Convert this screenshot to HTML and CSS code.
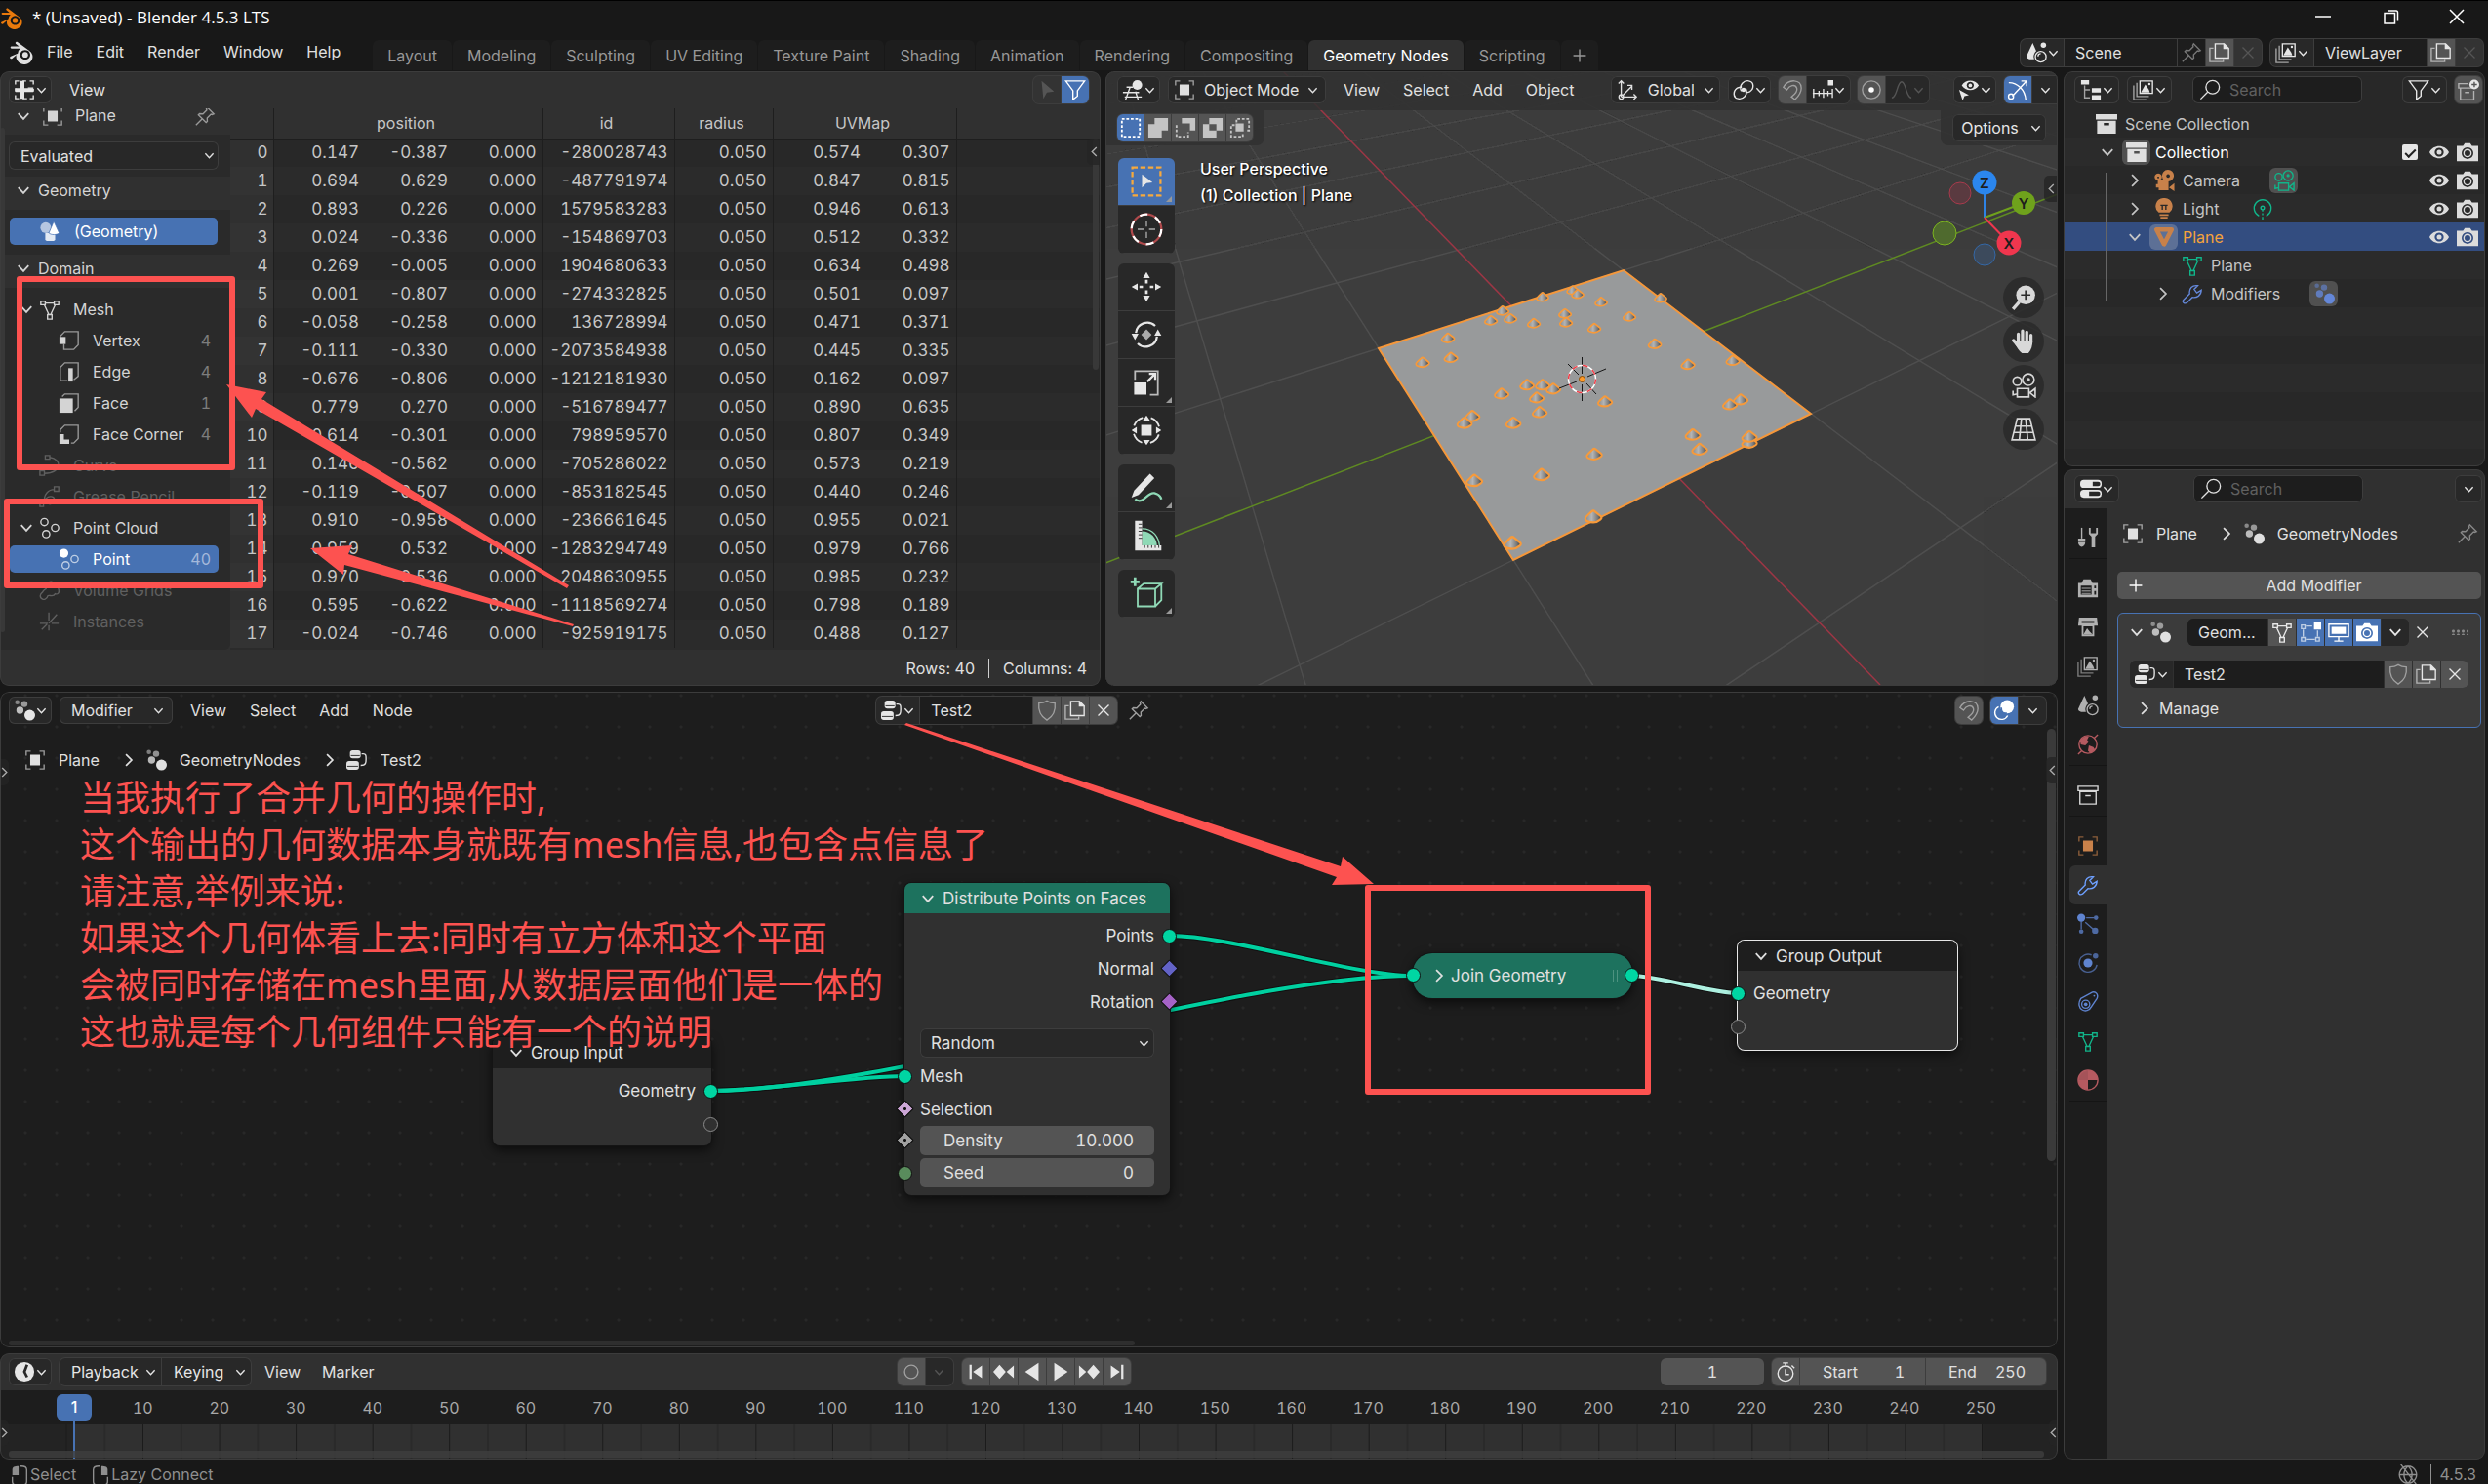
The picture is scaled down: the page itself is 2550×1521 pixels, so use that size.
FILE: index.html
```html
<!DOCTYPE html>
<html lang="en">
<head>
<meta charset="utf-8">
<title>* (Unsaved) - Blender 4.5.3 LTS</title>
<link rel="stylesheet" href="styles.css">
</head>
<body>
<svg class="sprite" aria-hidden="true">
  <symbol id="chev" viewBox="0 0 12 12"><path d="M1.5 3.5l4.500 5 4.500-5" class="ln"/></symbol>
  <symbol id="chev-r" viewBox="0 0 12 12"><path d="M3.5 1l5 5-5 5" class="ln"/></symbol>
  <symbol id="chev-l" viewBox="0 0 12 12"><path d="M8.5 1l-5 5 5 5" class="ln"/></symbol>
  <symbol id="x" viewBox="0 0 24 24"><path d="M6 6l12 12M18 6L6 18" class="ln"/></symbol>
  <symbol id="plus" viewBox="0 0 24 24"><path d="M12 5v14M5 12h14" class="ln"/></symbol>
  <symbol id="blender" viewBox="0 0 24 24"><path fill="currentColor" fill-rule="evenodd" d="M8.5 13.5a7.5 6.8 0 0 1 2.300-4.600H2.600c-1.200 0-1.400-1.700-.3-2h7.400L6.500 4.300c-.8-1 .6-2.300 1.700-1.600l11 8.200a7.800 7.200 0 1 1-12 4.200l-4 3.300c-1.300.9-2.800-.7-1.800-1.700zM15.500 10.300a4.800 4.600 0 1 0 .01 0z"/><circle cx="15.500" cy="14.900" r="2.700" class="hub"/></symbol>
  <symbol id="sheet" viewBox="0 0 24 24"><path d="M2 6V2h4M10 2h4M18 2h4v4M2 18v4h4M18 22h4v-4M22 10h-6M2 10v4M10 22h5M22 14v-3" class="ln"/><path d="M7.500 2h4.500v8h10v4.500H12V22H7.500v-7.500H2V10h5.500z" fill="currentColor"/></symbol>
  <symbol id="object" viewBox="0 0 24 24"><path d="M2 7V2h5M17 2h5v5M22 17v5h-5M7 22H2v-5" class="ln dim"/><path d="M6.500 6h11v12h-11z" fill="currentColor"/></symbol>
  <symbol id="pin" viewBox="0 0 24 24"><path d="M14.500 2l7.500 7.500-2 .8-1.200-.5-4.300 4.400.2 3.800-1.400 1.200-8.600-8.600L6 9.300l3.800.2 4.300-4.300-.5-1.300zM8.800 15.200L2 22" class="ln"/></symbol>
  <symbol id="geo" viewBox="0 0 24 24"><circle cx="7.500" cy="8" r="6" fill="currentColor" opacity=".6"/><path d="M7 14h11v7a2 2 0 0 1-2 2H9a2 2 0 0 1-2-2z" fill="currentColor" opacity=".85"/><path d="M16.500 1l6 13c-2 2.500-9.500 2.500-11.500 0z" fill="currentColor" stroke="#4772b3" stroke-width=".8"/></symbol>
  <symbol id="mesh" viewBox="0 0 24 24"><path d="M2 3h5v4H2zM17 3h5v4h-5zM9.500 18h5v5h-5zM7 5h10M6 7l5 11M18 7l-5 11" class="ln"/></symbol>
  <symbol id="vertex" viewBox="0 0 24 24"><path d="M2 9V7l5-5h15v15l-5 5H6V16" class="ln dim"/><path d="M1 8h7v8H1z" fill="currentColor"/></symbol>
  <symbol id="edge" viewBox="0 0 24 24"><path d="M10 22H2V7l5-5h15v15l-5 4" class="ln dim"/><path d="M11 8h5v15h-5z" fill="currentColor"/></symbol>
  <symbol id="face" viewBox="0 0 24 24"><path d="M4 5l3-3h15v15l-4 4" class="ln dim"/><path d="M1 7h15v16H1z" fill="currentColor"/></symbol>
  <symbol id="corner" viewBox="0 0 24 24"><path d="M2 10V7l5-5h15v15l-5 5h-3" class="ln dim"/><path d="M1 12h5v6h6v5H1z" fill="currentColor"/></symbol>
  <symbol id="curve" viewBox="0 0 24 24"><path d="M7 1h5v4H7zM1 18h5v5H1zM12 3c14 2 14 17-6 18" class="ln"/></symbol>
  <symbol id="gpencil" viewBox="0 0 24 24"><path d="M17 1h5v5h-5zM1 19h4v4H1zM17 4C10 4 6 10 6 15c1 7 10 7 11 1s-9-6-12 3" class="ln"/></symbol>
  <symbol id="cloud" viewBox="0 0 24 24"><g class="ln"><circle cx="6" cy="5.500" r="4"/><circle cx="18" cy="12" r="4"/><circle cx="8" cy="19" r="4"/></g></symbol>
  <symbol id="point" viewBox="0 0 24 24"><circle cx="6" cy="5.500" r="5" fill="currentColor"/><g class="ln dim"><circle cx="18" cy="12" r="4"/><circle cx="8" cy="19" r="4"/></g></symbol>
  <symbol id="volume" viewBox="0 0 24 24"><path d="M4 22c-4-2-3-6 0-8 1-2 3-3 4-4-2-6 6-11 9-5 0 3 5 2 5 6 1 4-1 6-4 5-2 4-6 1-8 2-1 3-4 5-6 4z" class="ln"/></symbol>
  <symbol id="inst" viewBox="0 0 24 24"><path d="M11 2v9M11 16v6M1 14h9M14 14h8M11 14l9-10M9 15l-6 6" class="ln"/></symbol>
  <symbol id="arrow" viewBox="0 0 24 24"><path d="M6 2l14 12-8 1-4 7z" fill="currentColor"/></symbol>
  <symbol id="filter" viewBox="0 0 24 24"><path d="M1.500 2h21L14.500 13v6l-5 4V13z" class="ln"/></symbol>
  <symbol id="view3d" viewBox="0 0 24 24"><path d="M1 15h18M3 20h19M9 9L4 23M15 14l3 9M5 9h7" class="ln"/><circle cx="17" cy="6.500" r="5.500" fill="currentColor"/></symbol>
  <symbol id="axes" viewBox="0 0 24 24"><path d="M5 20V2M2 5l3-3 3 3M5 20h17M19 17l3 3-3 3M7 18L17 8M17 12V7h-5" class="ln"/><circle cx="5" cy="20" r="2.500" class="ln"/></symbol>
  <symbol id="pivot" viewBox="0 0 24 24"><path d="M9.500 13.500C6 6 13 1 18 2c6 1 6 9 1 12-2 1-4 1-5 1M14.500 10.500C18 18 11 23 6 22c-6-1-6-9-1-12 2-1 4-1 5-1" class="ln"/><circle cx="12" cy="12" r="2.500" fill="currentColor"/></symbol>
  <symbol id="magnet" viewBox="0 0 24 24"><path d="M2 9C8-1 22 0 22 10c0 5-3 9-7 13l-4-3c5-4 7-7 6-10-2-5-8-3-11 2z" class="ln"/></symbol>
  <symbol id="snapinc" viewBox="0 0 24 24"><path d="M1 16h22M2 11v10M8 13v6M13 11v10M18 13v6M23 11v10" class="ln"/><path d="M18 1h6v6h-6z" fill="currentColor"/></symbol>
  <symbol id="prop" viewBox="0 0 24 24"><circle cx="12" cy="12" r="10" class="ln"/><circle cx="12" cy="12" r="3" fill="#fff"/></symbol>
  <symbol id="bell" viewBox="0 0 24 24"><path d="M1 21c6 0 6-18 11-18s5 18 11 18" class="ln"/></symbol>
  <symbol id="vis" viewBox="0 0 24 24"><path fill="currentColor" fill-rule="evenodd" d="M4 7c4-7 15-7 19 0-4 7-15 7-19 0zM13.500 3a4 4 0 1 0 .01 0z"/><circle cx="13.500" cy="7" r="2" fill="currentColor"/><path d="M1 12l11 6-5 1-2 5z" fill="currentColor"/></symbol>
  <symbol id="gizmo" viewBox="0 0 24 24"><path d="M2 4c10 0 18 8 19 19M6 19L22 2M16 2h6v6" class="ln"/><circle cx="4.500" cy="19.500" r="2.800" class="ln"/></symbol>
  <symbol id="s-new" viewBox="0 0 24 24"><path d="M2 2h20v20H2z" class="ln thick" stroke-dasharray="3 2"/></symbol>
  <symbol id="s-ext" viewBox="0 0 24 24"><path d="M8 1h15v14h-7v8H1V8h7z" fill="currentColor"/></symbol>
  <symbol id="s-sub" viewBox="0 0 24 24"><path d="M8 1h15v14h-6V7H8z" fill="currentColor"/><path d="M2 9v13h13v-5" class="ln thick" stroke-dasharray="3 2"/></symbol>
  <symbol id="s-xor" viewBox="0 0 24 24"><path fill="currentColor" fill-rule="evenodd" d="M8 1h15v14h-7v8H1V8h7zM8 8v7h8V8z"/></symbol>
  <symbol id="s-int" viewBox="0 0 24 24"><path d="M8 6V2h14v13h-4M6 9H2v13h13v-4" class="ln thick" stroke-dasharray="3 2"/><path d="M7 7h9v9H7z" fill="currentColor"/></symbol>
  <symbol id="t-box" viewBox="0 0 40 40"><path d="M4 4h32v32H4z" fill="none" stroke="#f7a93c" stroke-width="2.500" stroke-dasharray="6 3"/><path d="M15 12l12 9-7 1-5 5z" fill="currentColor"/></symbol>
  <symbol id="t-cur" viewBox="0 0 40 40"><circle cx="20" cy="20" r="17" fill="none" stroke="#b04a4c" stroke-width="2.500"/><circle cx="20" cy="20" r="17" fill="none" stroke="#fff" stroke-width="2.500" stroke-dasharray="9 9"/><path d="M20 10v7M20 23v7M10 20h7M23 20h7" stroke="#aaa" stroke-width="1.500"/></symbol>
  <symbol id="t-move" viewBox="0 0 40 40"><path d="M20 3l4 7h-8zM20 37l-4-7h8zM3 20l7-4v8zM37 20l-7 4v-8z" fill="currentColor"/><path d="M20 12v4M20 24v4M12 20h4M24 20h4" stroke="currentColor" stroke-width="3"/></symbol>
  <symbol id="t-rot" viewBox="0 0 40 40"><path d="M8 18A13 13 0 0 1 30 10M32 22A13 13 0 0 1 10 30" fill="none" stroke="currentColor" stroke-width="2.500"/><path d="M3 19h8l-4 7zM29 21h8l-4-7z" fill="currentColor"/><path d="M20 14l6 6-6 6-6-6z" fill="#aaa"/></symbol>
  <symbol id="t-scale" viewBox="0 0 40 40"><path d="M7 17V7h26v27H24" fill="none" stroke="#bbb" stroke-width="2"/><path d="M6 20h14v14H6z" fill="currentColor"/><path d="M21 19l9-9M23 10h7v7" fill="none" stroke="currentColor" stroke-width="2.500"/></symbol>
  <symbol id="t-all" viewBox="0 0 40 40"><circle cx="20" cy="20" r="15" fill="none" stroke="currentColor" stroke-width="2" stroke-dasharray="14 9.500" stroke-dashoffset="-5"/><path d="M14 14h12v12H14zM20 3l4 6h-8zM20 37l-4-6h8zM3 20l6-4v8zM37 20l-6 4v-8z" fill="currentColor"/></symbol>
  <symbol id="t-pen" viewBox="0 0 40 40"><path d="M24 4l5 5L11 28l-8 3 3-8z" fill="currentColor"/><path d="M7 33c10 7 14-9 22-7 4 1 7 3 8 7" fill="none" stroke="#8fd9b6" stroke-width="2.500"/></symbol>
  <symbol id="t-meas" viewBox="0 0 40 40"><path d="M15 15c10 0 17 8 17 17H15z" fill="#8fd9b6"/><path d="M15 12c13 0 19 10 20 20" fill="none" stroke="#8fd9b6" stroke-width="1.500"/><path d="M7 3h8v28h22v6H7z" fill="currentColor"/><path d="M11 7h4M11 11h4M11 15h4M11 19h4M11 23h4M18 31v3M22 31v3M26 31v3M30 31v3M34 31v3" stroke="#282828"/></symbol>
  <symbol id="t-cube" viewBox="0 0 40 40"><path d="M10 15h20v20H10zM10 15l7-6h20l-7 6M37 9v19l-7 7" fill="none" stroke="#8fd9b6" stroke-width="2"/><path d="M7 2v10M2 7h10" stroke="#8fd9b6" stroke-width="3"/></symbol>
  <symbol id="zoom" viewBox="0 0 24 24"><circle cx="14" cy="9.500" r="9" fill="currentColor"/><path d="M8 16l-6 7" stroke="currentColor" stroke-width="3"/><path d="M14 5v9M9.500 9.500h9" stroke="#2a2a2a" stroke-width="1.500"/></symbol>
  <symbol id="hand" viewBox="0 0 24 24"><path d="M7 13V5M11 12V2M15 12V3M19 13V6M7 16L2.500 11" stroke="currentColor" stroke-width="3" stroke-linecap="round"/><path d="M5.500 11h15c0 5-1 9-4 12h-6c-3-2-5-6-7-9z" fill="currentColor"/></symbol>
  <symbol id="cam" viewBox="0 0 24 24"><g class="ln"><circle cx="6" cy="8" r="4"/><circle cx="16.500" cy="6.500" r="5.500"/><circle cx="16.500" cy="6.500" r="1"/><path d="M6 15h11v8H6zM2 17v4l4-1M23 15v8l-5-4z"/></g></symbol>
  <symbol id="camf" viewBox="0 0 24 24"><path fill="currentColor" fill-rule="evenodd" d="M5.500 4a4 4 0 1 0 .01 0zM16.500 0a6.500 6.500 0 0 0-6.500 8c0 3 3 5 6.500 5a6.500 6.500 0 0 0 0-13zM16.500 5a2 2 0 1 1-.01 0zM5.500 7.500a1 1 0 1 1-.01 0z"/><path d="M5 12h12v11H6v-3H3v-4h2zM23.500 15v9l-6-4z" fill="currentColor"/></symbol>
  <symbol id="persp" viewBox="0 0 24 24"><path d="M6 2h12l5 20H1zM4 9h16M3 15h18M10 2L8 22M14 2l2 20" class="ln"/></symbol>
  <symbol id="scene" viewBox="0 0 24 24"><path d="M8 1l4 9c-4 4-3 8-2 9-4 1-9 0-9-3z" fill="currentColor"/><circle cx="20" cy="3.500" r="3" fill="currentColor"/><circle cx="17" cy="16.500" r="6" class="ln"/><path d="M14 16a3 3 0 0 1 3-3" class="ln"/></symbol>
  <symbol id="copy" viewBox="0 0 24 24"><path d="M5 7H1v15h15v-3" class="ln dim"/><path d="M7 2h10l5 5v11H7z" class="ln"/><path d="M16 1l7 7h-7z" fill="currentColor"/></symbol>
  <symbol id="layers" viewBox="0 0 24 24"><path d="M1 7v16h14M4.500 4v15.500H18" class="ln dim"/><path d="M8 2h14v14H8z" class="ln"/><path d="M9 15l5-9 4 6 1 3z" fill="currentColor"/><circle cx="18.500" cy="5.500" r="1.300" fill="currentColor"/></symbol>
  <symbol id="tree" viewBox="0 0 24 24"><path d="M1 1h9v5H1zM13 10h10v5H13zM13 18h10v5H13z" fill="currentColor"/><path d="M5 7v14h6M5 12h6" class="ln dim"/></symbol>
  <symbol id="search" viewBox="0 0 24 24"><circle cx="15" cy="9" r="7.500" class="ln"/><path d="M9.500 14.500L1.500 22.500" class="ln"/></symbol>
  <symbol id="newcol" viewBox="0 0 24 24"><path d="M12 5H1v5h15M3 10v13h15V13M8 15h5" class="ln dim"/><circle cx="18.500" cy="6" r="5.500" fill="currentColor"/><path d="M18.500 3v6M15.500 6h6" stroke="#545454" stroke-width="1.500"/></symbol>
  <symbol id="coll" viewBox="0 0 24 24"><path fill="currentColor" fill-rule="evenodd" d="M0 1h24v6H0zM1.500 8.500h21V23h-21zM9 11v2.500h6V11z"/></symbol>
  <symbol id="collo" viewBox="0 0 24 24"><path d="M1 2h22v5H1zM3 8h18v14H3zM9 12.500h6" class="ln"/></symbol>
  <symbol id="bulb" viewBox="0 0 24 24"><path d="M12 0a9 9 0 0 0-6 16h12A9 9 0 0 0 12 0zM7 18h10v2H7zM8 21h8v2H8z" fill="currentColor"/><path d="M8 8h8M10 8v5M14 8v5" stroke="#282828" stroke-width="1.500"/></symbol>
  <symbol id="lightd" viewBox="0 0 24 24"><path d="M8 20A9.500 9.500 0 1 1 16 20M12 13v2M12 17v2M12 21v3" class="ln"/><circle cx="12" cy="11" r="2" class="ln"/></symbol>
  <symbol id="tri" viewBox="0 0 24 24"><path d="M3.500 3.500h17L12 20z" fill="none" stroke="currentColor" stroke-width="5" stroke-linejoin="round"/></symbol>
  <symbol id="wrench" viewBox="0 0 24 24"><path d="M2 19l7-7c-1-6 3-10 9-9l-4 4 3 4 5-3c0 6-5 9-10 8l-6 6c-3 2-6-1-4-3z" class="wr"/></symbol>
  <symbol id="nodes" viewBox="0 0 24 24"><circle cx="4" cy="3" r="2.500" fill="currentColor" opacity=".5"/><circle cx="12" cy="5" r="3.500" fill="currentColor" opacity=".6"/><circle cx="7" cy="12" r="4" fill="currentColor" opacity=".8"/><circle cx="18" cy="17.500" r="6" fill="currentColor"/></symbol>
  <symbol id="eye" viewBox="0 0 24 24"><path fill="currentColor" fill-rule="evenodd" d="M0 12C5 2 19 2 24 12 19 22 5 22 0 12zM12 6.500a5.500 5.500 0 1 0 .01 0z"/><circle cx="12" cy="12" r="3" fill="currentColor"/></symbol>
  <symbol id="photo" viewBox="0 0 24 24"><path fill="currentColor" fill-rule="evenodd" d="M0 5h7l2-3h6l2 3h7v17H0zM12 6.500a6.500 6.500 0 1 0 .01 0z"/><circle cx="12" cy="13" r="4" class="ln"/></symbol>
  <symbol id="props" viewBox="0 0 24 24"><rect y="2" width="24" height="9" rx="4" fill="currentColor"/><rect y="13" width="24" height="9" rx="4" fill="currentColor"/><path d="M14 4h6a2.500 2.500 0 0 1 0 5h-6zM10 15h10a2.500 2.500 0 0 1 0 5H10z" fill="#282828"/></symbol>
  <symbol id="tool" viewBox="0 0 24 24"><path d="M5 1v12" class="ln"/><path d="M1 13h8v3H1zM1 17h8c0 7-8 7-8 0zM13 1v7l3 3v12h4V11l3-3V1h-2v6h-6V1z" fill="currentColor"/></symbol>
  <symbol id="render" viewBox="0 0 24 24"><path fill="currentColor" fill-rule="evenodd" d="M1 6h4l2-4h8l2 4h6v16H1zM4 9v10h12V9zM19 9v3h2V9zM19 15v4h2v-4z"/><path d="M5 12h10M5 15h10M5 18h10" class="ln dim"/></symbol>
  <symbol id="output" viewBox="0 0 24 24"><path fill="currentColor" fill-rule="evenodd" d="M2 1h20l1 9h-4v12H5V10H1zM7 11v9h10v-9zM5 5v2h14V5z"/><path d="M7 20l4-7 3 4 3 3z" fill="currentColor"/></symbol>
  <symbol id="world" viewBox="0 0 24 24"><circle cx="12" cy="12" r="10" class="ln"/><path d="M3 7c4-4 7-5 10-4l-2 4 2 2-4 4-5-1zM13 13l5 2 2 3-5 4-3-3z" fill="currentColor"/><path d="M23 1l-4 4M1 23l4-4" class="ln"/></symbol>
  <symbol id="parts" viewBox="0 0 24 24"><circle cx="4.500" cy="5" r="4.500" fill="currentColor"/><g opacity=".75"><circle cx="21" cy="5" r="2.500" fill="currentColor"/><circle cx="4.500" cy="20.500" r="2.500" fill="currentColor"/><circle cx="20" cy="19.500" r="3.500" fill="currentColor"/><path d="M4.500 9v9M10 5h9M9 10l9 8" class="ln"/></g></symbol>
  <symbol id="phys" viewBox="0 0 24 24"><circle cx="12" cy="12" r="5" fill="currentColor"/><circle cx="20.500" cy="4" r="3" fill="currentColor" opacity=".7"/><path d="M16 3A10 10 0 1 0 22 14" class="ln dim"/></symbol>
  <symbol id="cons" viewBox="0 0 24 24"><path d="M4 8L17 1c4-1 7 3 5 7l-6 9C11 27-3 20 4 8z" class="ln"/><circle cx="9.500" cy="14.500" r="4.500" class="ln"/><circle cx="9.500" cy="14.500" r="2" fill="currentColor"/><circle cx="19" cy="5" r="1" fill="currentColor"/></symbol>
  <symbol id="mat" viewBox="0 0 24 24"><circle cx="12" cy="12" r="11" class="ln"/><path d="M12 1A11 11 0 0 0 1 12h11zM12 1a11 11 0 0 1 11 11H12z" fill="currentColor" opacity=".9"/><path d="M12 1v11h11A11 11 0 0 0 12 1zM1 12h11v11A11 11 0 0 1 1 12z" fill="currentColor"/></symbol>
  <symbol id="editm" viewBox="0 0 24 24"><path d="M2 4h4v4H2zM2 18h4v4H2zM18 18h4v4h-4zM7 5h7M4 9v8M7 20h10M20 10v7" class="ln dim"/><path d="M16 1h8v8h-8z" fill="currentColor"/></symbol>
  <symbol id="screen" viewBox="0 0 24 24"><path d="M1 3h22v14H1zM7 22h10M12 17v5" class="ln"/><path d="M4 6h16v8H4z" fill="currentColor"/></symbol>
  <symbol id="ntree" viewBox="0 0 24 24"><rect x="4" y="1" width="12" height="9" rx="3" fill="currentColor"/><rect x="0" y="13" width="14" height="10" rx="3" fill="currentColor"/><path d="M17 5h2c3 0 3 2 3 6s0 7-6 7" class="ln"/><path d="M5 7h10M1 19h12" stroke="#282828"/></symbol>
  <symbol id="shield" viewBox="0 0 24 24"><path d="M12 1.500C9 3.500 6 4 3 4c-1 9 2 15 9 19 7-4 10-10 9-19-3 0-6-.5-9-2.500z" class="ln"/></symbol>
  <symbol id="overlay" viewBox="0 0 24 24"><circle cx="15.500" cy="8" r="7.500" fill="currentColor"/><path d="M6 8a7.500 7.500 0 1 0 10 10" class="ln"/><path d="M9 9c0 5 2 7 6 6" stroke="#4772b3" stroke-width="1.500" fill="none"/></symbol>
  <symbol id="clockf" viewBox="0 0 24 24"><circle cx="12" cy="12" r="11" fill="currentColor"/><path d="M15 4l-3 8 3 6" fill="none" stroke="#282828" stroke-width="3"/></symbol>
  <symbol id="watch" viewBox="0 0 24 24"><circle cx="12" cy="14" r="8.500" class="ln"/><path d="M9 2h6M12 2v3M12 9v6h4M19 5l3 3" class="ln"/></symbol>
  <symbol id="p-first" viewBox="0 0 24 24"><path d="M5 4h2.500v16H5zM19 5v14L9 12z" fill="currentColor"/></symbol>
  <symbol id="p-prev" viewBox="0 0 24 24"><path d="M7 4l7 8-7 8-7-8zM23 5v14l-8-7z" fill="currentColor"/></symbol>
  <symbol id="p-rev" viewBox="0 0 24 24"><path d="M19 2v20L4 12z" fill="currentColor"/></symbol>
  <symbol id="mouse" viewBox="0 0 24 24"><path d="M13 3h1c4 0 6 1 6 4v13c0 3-1 4-4 4H8c-3 0-4-1-4-4v-5" class="ln"/><path d="M4 13V7c0-3 2-4 7-4v10z" fill="currentColor"/></symbol>
  <symbol id="globe" viewBox="0 0 24 24"><path d="M12 3a9.500 9.500 0 1 0 .01 0zM12 3c-6 5-6 14 0 19 6-5 6-14 0-19zM3 12.500h18M4 1l17 22" class="ln"/></symbol>
</svg>

<div class="app">
  <header class="titlebar">
    <svg class="logo"><use href="#blender"/></svg>
    <h1>* (Unsaved) - Blender 4.5.3 LTS</h1>
    <div class="winctl">
      <button aria-label="Minimize"><svg viewBox="0 0 16 16"><path d="M0 8h16" class="ln"/></svg></button>
      <button aria-label="Restore"><svg viewBox="0 0 16 16"><path d="M1 4.500h10.500V15H1zM4 2h9q1.500 0 1.500 2v8.500" class="ln"/></svg></button>
      <button aria-label="Close"><svg viewBox="0 0 16 16"><path d="M1 1l14 14M15 1L1 15" class="ln"/></svg></button>
    </div>
  </header>

  <nav class="topbar">
    <button class="brand" aria-label="Blender"><svg class="ic"><use href="#blender"/></svg></button>
    <div class="menus"><button>File</button><button>Edit</button><button>Render</button><button>Window</button><button>Help</button></div>
    <div class="tabs">
      <button>Layout</button><button>Modeling</button><button>Sculpting</button><button>UV Editing</button><button>Texture Paint</button><button>Shading</button><button>Animation</button><button>Rendering</button><button>Compositing</button><button class="on">Geometry Nodes</button><button>Scripting</button><button aria-label="Add workspace"><svg class="ic"><use href="#plus"/></svg></button>
    </div>
    <div class="ids">
      <div class="grp scene"><button class="ed" aria-label="Browse scene"><svg class="ic"><use href="#scene"/></svg><svg class="cv"><use href="#chev"/></svg></button><input aria-label="Scene" value="Scene"><span class="cell field"><svg class="ic faint"><use href="#pin"/></svg></span><button class="cell" aria-label="New scene"><svg class="ic"><use href="#copy"/></svg></button><button class="cell off" aria-label="Delete scene"><svg class="ic"><use href="#x"/></svg></button></div>
      <div class="grp layer"><button class="ed" aria-label="Browse view layer"><svg class="ic"><use href="#layers"/></svg><svg class="cv"><use href="#chev"/></svg></button><input aria-label="View layer" value="ViewLayer"><button class="cell" aria-label="New layer"><svg class="ic"><use href="#copy"/></svg></button><button class="cell off" aria-label="Delete layer"><svg class="ic"><use href="#x"/></svg></button></div>
    </div>
  </nav>

  <main class="screen">
    <div class="left">
      <div class="upper">
        <section class="editor spread">
          <header class="bar">
            <button class="ed box" aria-label="Editor type"><svg class="ic"><use href="#sheet"/></svg><svg class="cv"><use href="#chev"/></svg></button>
            <div class="menus"><button>View</button></div>
            <i class="grow"></i>
            <div class="grp"><button class="cell off" aria-label="Selected only"><svg class="ic"><use href="#arrow"/></svg></button><button class="cell on" aria-label="Filter"><svg class="ic"><use href="#filter"/></svg></button></div>
          </header>
          <div class="spread-body">
            <aside class="side">
              <i class="vscroll"></i>
              <div class="phead first"><svg class="cv big"><use href="#chev"/></svg><svg class="ic"><use href="#object"/></svg><span>Plane</span><svg class="ic pin"><use href="#pin"/></svg></div>
              <div class="dd eval"><select aria-label="Object evaluation state"><option>Evaluated</option></select><svg class="cv"><use href="#chev"/></svg></div>
              <div class="phead"><svg class="cv big"><use href="#chev"/></svg><span>Geometry</span></div>
              <button class="geo"><svg class="ic"><use href="#geo"/></svg>(Geometry)</button>
              <div class="phead"><svg class="cv big"><use href="#chev"/></svg><span>Domain</span></div>
              <ul class="domains">
                <li><svg class="cv big"><use href="#chev"/></svg><svg class="ic"><use href="#mesh"/></svg><span>Mesh</span></li>
                <li class="sub"><svg class="ic"><use href="#vertex"/></svg><span>Vertex</span><b>4</b></li>
                <li class="sub"><svg class="ic"><use href="#edge"/></svg><span>Edge</span><b>4</b></li>
                <li class="sub"><svg class="ic"><use href="#face"/></svg><span>Face</span><b>1</b></li>
                <li class="sub"><svg class="ic"><use href="#corner"/></svg><span>Face Corner</span><b>4</b></li>
                <li class="none"><svg class="ic"><use href="#curve"/></svg><span>Curve</span></li>
                <li class="none"><svg class="ic"><use href="#gpencil"/></svg><span>Grease Pencil</span></li>
                <li><svg class="cv big"><use href="#chev"/></svg><svg class="ic"><use href="#cloud"/></svg><span>Point Cloud</span></li>
                <li class="sub sel"><svg class="ic"><use href="#point"/></svg><span>Point</span><b>40</b></li>
                <li class="none"><svg class="ic"><use href="#volume"/></svg><span>Volume Grids</span></li>
                <li class="none"><svg class="ic"><use href="#inst"/></svg><span>Instances</span></li>
              </ul>
            </aside>
            <div class="tablewrap">
              <table>
                <colgroup><col class="c-i"><col class="c-x"><col class="c-y"><col class="c-y"><col class="c-id"><col class="c-r"><col class="c-u"><col class="c-v"><col></colgroup>
                <thead><tr><th></th><th colspan="3">position</th><th>id</th><th>radius</th><th colspan="2">UVMap</th><th></th></tr></thead>
                <tbody>
                <tr><th>0</th><td>0.147</td><td>-0.387</td><td>0.000</td><td>-280028743</td><td>0.050</td><td>0.574</td><td>0.307</td><td></td></tr>
                <tr><th>1</th><td>0.694</td><td>0.629</td><td>0.000</td><td>-487791974</td><td>0.050</td><td>0.847</td><td>0.815</td><td></td></tr>
                <tr><th>2</th><td>0.893</td><td>0.226</td><td>0.000</td><td>1579583283</td><td>0.050</td><td>0.946</td><td>0.613</td><td></td></tr>
                <tr><th>3</th><td>0.024</td><td>-0.336</td><td>0.000</td><td>-154869703</td><td>0.050</td><td>0.512</td><td>0.332</td><td></td></tr>
                <tr><th>4</th><td>0.269</td><td>-0.005</td><td>0.000</td><td>1904680633</td><td>0.050</td><td>0.634</td><td>0.498</td><td></td></tr>
                <tr><th>5</th><td>0.001</td><td>-0.807</td><td>0.000</td><td>-274332825</td><td>0.050</td><td>0.501</td><td>0.097</td><td></td></tr>
                <tr><th>6</th><td>-0.058</td><td>-0.258</td><td>0.000</td><td>136728994</td><td>0.050</td><td>0.471</td><td>0.371</td><td></td></tr>
                <tr><th>7</th><td>-0.111</td><td>-0.330</td><td>0.000</td><td>-2073584938</td><td>0.050</td><td>0.445</td><td>0.335</td><td></td></tr>
                <tr><th>8</th><td>-0.676</td><td>-0.806</td><td>0.000</td><td>-1212181930</td><td>0.050</td><td>0.162</td><td>0.097</td><td></td></tr>
                <tr><th>9</th><td>0.779</td><td>0.270</td><td>0.000</td><td>-516789477</td><td>0.050</td><td>0.890</td><td>0.635</td><td></td></tr>
                <tr><th>10</th><td>0.614</td><td>-0.301</td><td>0.000</td><td>798959570</td><td>0.050</td><td>0.807</td><td>0.349</td><td></td></tr>
                <tr><th>11</th><td>0.146</td><td>-0.562</td><td>0.000</td><td>-705286022</td><td>0.050</td><td>0.573</td><td>0.219</td><td></td></tr>
                <tr><th>12</th><td>-0.119</td><td>-0.507</td><td>0.000</td><td>-853182545</td><td>0.050</td><td>0.440</td><td>0.246</td><td></td></tr>
                <tr><th>13</th><td>0.910</td><td>-0.958</td><td>0.000</td><td>-236661645</td><td>0.050</td><td>0.955</td><td>0.021</td><td></td></tr>
                <tr><th>14</th><td>0.959</td><td>0.532</td><td>0.000</td><td>-1283294749</td><td>0.050</td><td>0.979</td><td>0.766</td><td></td></tr>
                <tr><th>15</th><td>0.970</td><td>-0.536</td><td>0.000</td><td>2048630955</td><td>0.050</td><td>0.985</td><td>0.232</td><td></td></tr>
                <tr><th>16</th><td>0.595</td><td>-0.622</td><td>0.000</td><td>-1118569274</td><td>0.050</td><td>0.798</td><td>0.189</td><td></td></tr>
                <tr><th>17</th><td>-0.024</td><td>-0.746</td><td>0.000</td><td>-925919175</td><td>0.050</td><td>0.488</td><td>0.127</td><td></td></tr>
                </tbody>
              </table>
              <i class="vscroll right"></i>
              <button class="flap" aria-label="Show sidebar"><svg class="cv"><use href="#chev-l"/></svg></button>
            </div>
          </div>
          <footer class="stats"><span>Rows: 40</span><i></i><span>Columns: 4</span></footer>
        </section>

        <section class="editor view3d">
          <svg class="world" viewBox="1133 73 976 630" preserveAspectRatio="xMidYMid slice">
            <defs><linearGradient id="shade"><stop offset="0" stop-color="#8a8a8a"/><stop offset=".4" stop-color="#b4b4b4"/><stop offset=".75" stop-color="#7a7a7a"/><stop offset="1" stop-color="#3c3c3c"/></linearGradient>
            <path id="cone" d="M-7 2Q-7 1-1.500-4Q0-5.500 1.500-4L6.500 0Q8 1.500 6 3Q3 5.500 0 5.500T-6 4Q-7 3-7 2z" fill="url(#shade)" stroke="#f79a3a" stroke-width="1.900"/></defs>
            <g id="floor"></g>
            <path d="M1315 73L1927 702" stroke="#9c3645" stroke-width="1.500"/>
            <path d="M1133 577L2109 199" stroke="#5f8a22" stroke-width="1.500"/>
            <path d="M1413 357L1664 277 1856 424 1551 574z" fill="#989a9b" stroke="#f5973a" stroke-width="2"/>
            <g id="points"></g>
            <g stroke="#161616" stroke-width="1"><path d="M1621.500 366v17M1621.500 394v17M1598 398l18-7M1627 386l19-8M1607 373l11 11M1626 393l10 11"/></g>
            <circle cx="1621.500" cy="388.500" r="14" fill="none" stroke="#fff" stroke-width="1.500"/><circle cx="1621.500" cy="388.500" r="14" fill="none" stroke="#f03c46" stroke-width="1.500" stroke-dasharray="5.500 5.500"/>
            <circle cx="1621.500" cy="388.500" r="3" fill="#ff9a2a" stroke="#8a4a00"/>
          </svg>
          <header class="bar">
            <button class="ed box" aria-label="Editor type"><svg class="ic"><use href="#view3d"/></svg><svg class="cv"><use href="#chev"/></svg></button>
            <div class="dd mode"><svg class="ic"><use href="#object"/></svg><select aria-label="Mode"><option>Object Mode</option></select><svg class="cv"><use href="#chev"/></svg></div>
            <div class="menus"><button>View</button><button>Select</button><button>Add</button><button>Object</button></div>
            <i class="grow"></i>
            <div class="dd orient"><svg class="ic"><use href="#axes"/></svg><select aria-label="Transform orientation"><option>Global</option></select><svg class="cv"><use href="#chev"/></svg></div>
            <button class="ed box" aria-label="Pivot point"><svg class="ic"><use href="#pivot"/></svg><svg class="cv"><use href="#chev"/></svg></button>
            <div class="grp"><button class="cell dim" aria-label="Snap"><svg class="ic"><use href="#magnet"/></svg></button><button class="ed" aria-label="Snapping"><svg class="ic"><use href="#snapinc"/></svg><svg class="cv"><use href="#chev"/></svg></button></div>
            <div class="grp"><button class="cell dim" aria-label="Proportional editing"><svg class="ic"><use href="#prop"/></svg></button><button class="ed off" aria-label="Falloff"><svg class="ic"><use href="#bell"/></svg><svg class="cv"><use href="#chev"/></svg></button></div>
            <i class="grow"></i>
            <button class="ed box" aria-label="Visibility"><svg class="ic"><use href="#vis"/></svg><svg class="cv"><use href="#chev"/></svg></button>
            <div class="grp last"><button class="cell on" aria-label="Gizmos"><svg class="ic"><use href="#gizmo"/></svg></button><button class="ed slim" aria-label="Gizmo options"><svg class="cv"><use href="#chev"/></svg></button></div>
          </header>
          <div class="bar2">
            <div class="pad l"><div class="grp modes"><button class="cell on" aria-label="Set"><svg class="ic"><use href="#s-new"/></svg></button><button class="cell" aria-label="Extend"><svg class="ic"><use href="#s-ext"/></svg></button><button class="cell" aria-label="Subtract"><svg class="ic"><use href="#s-sub"/></svg></button><button class="cell" aria-label="Invert"><svg class="ic"><use href="#s-xor"/></svg></button><button class="cell" aria-label="Intersect"><svg class="ic"><use href="#s-int"/></svg></button></div></div>
            <div class="pad r"><button class="ed box opts">Options<svg class="cv"><use href="#chev"/></svg></button></div>
          </div>
          <div class="stage">
            <div class="tools">
              <div><button class="on more" aria-label="Select box"><svg><use href="#t-box"/></svg></button><button aria-label="Cursor"><svg><use href="#t-cur"/></svg></button></div>
              <div><button aria-label="Move"><svg><use href="#t-move"/></svg></button><button aria-label="Rotate"><svg><use href="#t-rot"/></svg></button><button class="more" aria-label="Scale"><svg><use href="#t-scale"/></svg></button><button aria-label="Transform"><svg><use href="#t-all"/></svg></button></div>
              <div><button class="more" aria-label="Annotate"><svg><use href="#t-pen"/></svg></button><button aria-label="Measure"><svg><use href="#t-meas"/></svg></button></div>
              <div><button class="more" aria-label="Add cube"><svg><use href="#t-cube"/></svg></button></div>
            </div>
            <p class="info">User Perspective<br>(1) Collection | Plane</p>
            <div class="nav">
              <svg class="axis" viewBox="1980 170 110 108"><path d="M2034 223v-36" stroke="#2e83e6" stroke-width="2"/><path d="M2034 223l40-15" stroke="#6fa21c" stroke-width="2"/><path d="M2034 223l25 26" stroke="#f0364e" stroke-width="2"/>
                <circle cx="2009" cy="198" r="11" fill="#5a3a40" stroke="#a83a4c"/><circle cx="1993" cy="239" r="12" fill="#4f6a2e" stroke="#7db61e"/><circle cx="2034" cy="261" r="11" fill="#3c4a5c" stroke="#3468a8"/>
                <circle cx="2034" cy="187" r="12.500" fill="#2b86ee"/><circle cx="2074" cy="208" r="12" fill="#6fa21c"/><circle cx="2059" cy="249" r="12.500" fill="#f0364e"/>
                <text x="2034" y="193">Z</text><text x="2074" y="214">Y</text><text x="2059" y="255">X</text></svg>
              <button aria-label="Zoom"><svg class="ic"><use href="#zoom"/></svg></button><button aria-label="Pan"><svg class="ic"><use href="#hand"/></svg></button><button aria-label="Camera view"><svg class="ic"><use href="#cam"/></svg></button><button aria-label="Perspective"><svg class="ic"><use href="#persp"/></svg></button>
            </div>
          </div>
          <button class="flap v" aria-label="Show sidebar"><svg class="cv"><use href="#chev-l"/></svg></button>
        </section>
      </div>

      <section class="editor nodes">
        <header class="bar">
          <button class="ed box" aria-label="Editor type"><svg class="ic"><use href="#nodes"/></svg><svg class="cv"><use href="#chev"/></svg></button>
          <div class="dd kind"><select aria-label="Node tree type"><option>Modifier</option></select><svg class="cv"><use href="#chev"/></svg></div>
          <div class="menus"><button>View</button><button>Select</button><button>Add</button><button>Node</button></div>
          <i class="grow a"></i>
          <div class="grp tree"><button class="ed" aria-label="Browse node tree"><svg class="ic"><use href="#ntree"/></svg><svg class="cv"><use href="#chev"/></svg></button><input aria-label="Node tree" value="Test2"><button class="cell dim" aria-label="Fake user"><svg class="ic"><use href="#shield"/></svg></button><button class="cell" aria-label="Duplicate"><svg class="ic"><use href="#copy"/></svg></button><button class="cell" aria-label="Unlink"><svg class="ic"><use href="#x"/></svg></button></div>
          <button class="bare" aria-label="Pin"><svg class="ic"><use href="#pin"/></svg></button>
          <i class="grow b"></i>
          <div class="grp solo"><button class="cell dim" aria-label="Snap"><svg class="ic"><use href="#magnet"/></svg></button></div>
          <div class="grp"><button class="cell on" aria-label="Overlays"><svg class="ic"><use href="#overlay"/></svg></button><button class="ed slim" aria-label="Overlay options"><svg class="cv"><use href="#chev"/></svg></button></div>
        </header>
        <nav class="crumbs"><svg class="ic"><use href="#object"/></svg><a href="#plane">Plane</a><svg class="cv big"><use href="#chev-r"/></svg><svg class="ic"><use href="#nodes"/></svg><a href="#mod">GeometryNodes</a><svg class="cv big"><use href="#chev-r"/></svg><svg class="ic"><use href="#ntree"/></svg><a href="#tree">Test2</a></nav>
        <div class="canvas">
          <svg class="links" viewBox="0 709 2109 672" width="2109" height="672">
            <g class="lo"><path d="M729 1118C909 1118 1268 1000 1448 1000"/><path d="M729 1118C779 1118 878 1103 927 1103"/><path d="M1199 959C1262 959 1386 1000 1448 1000"/><path d="M1672 1000C1699 1000 1754 1018 1781 1018"/></g>
            <g class="li"><path d="M729 1118C909 1118 1268 1000 1448 1000"/><path d="M729 1118C779 1118 878 1103 927 1103"/><path d="M1199 959C1262 959 1386 1000 1448 1000"/><path class="pale" d="M1672 1000C1699 1000 1754 1018 1781 1018"/></g>
          </svg>
          <article class="node n-in"><h2><svg class="cv big"><use href="#chev"/></svg>Group Input</h2><div class="row out">Geometry<i class="sk g"></i></div><div class="row out"><i class="sk e"></i></div></article>
          <article class="node n-dist"><h2><svg class="cv big"><use href="#chev"/></svg>Distribute Points on Faces</h2>
            <div class="row out">Points<i class="sk g"></i></div><div class="row out">Normal<i class="sk d vec"></i></div><div class="row out">Rotation<i class="sk d rot"></i></div>
            <div class="dd rnd"><select aria-label="Distribution method"><option>Random</option></select><svg class="cv"><use href="#chev"/></svg></div>
            <div class="row">Mesh<i class="sk g"></i></div><div class="row">Selection<i class="sk d sel"></i></div>
            <label class="row num"><span>Density</span><input value="10.000"><i class="sk d val"></i></label>
            <label class="row num"><span>Seed</span><input value="0"><i class="sk int"></i></label>
          </article>
          <article class="node n-join"><svg class="cv big"><use href="#chev-r"/></svg>Join Geometry<b></b><i class="sk g l"></i><i class="sk g r"></i></article>
          <article class="node n-out"><h2><svg class="cv big"><use href="#chev"/></svg>Group Output</h2><div class="row">Geometry<i class="sk g"></i></div><div class="row"><i class="sk e"></i></div></article>
        </div>
        <i class="vscroll canvas-v"></i><i class="hscroll"></i>
        <button class="flap n" aria-label="Show sidebar"><svg class="cv"><use href="#chev-l"/></svg></button>
        <button class="flap nl" aria-label="Show toolbar"><svg class="cv"><use href="#chev-r"/></svg></button>
      </section>

      <section class="editor timeline">
        <header class="bar">
          <button class="ed box" aria-label="Editor type"><svg class="ic"><use href="#clockf"/></svg><svg class="cv"><use href="#chev"/></svg></button>
          <div class="grp pop"><button class="ed w1">Playback<svg class="cv"><use href="#chev"/></svg></button><button class="ed w2">Keying<svg class="cv"><use href="#chev"/></svg></button></div>
          <div class="menus"><button>View</button><button>Marker</button></div>
          <i class="grow c"></i>
          <div class="grp"><button class="cell dim" aria-label="Auto keying"><svg class="ic" viewBox="0 0 24 24"><circle cx="12" cy="12" r="7.500" class="ln"/></svg></button><button class="ed slim off" aria-label="Keying options"><svg class="cv"><use href="#chev"/></svg></button></div>
          <div class="grp play"><button class="cell" aria-label="Jump to start"><svg class="ic"><use href="#p-first"/></svg></button><button class="cell" aria-label="Previous keyframe"><svg class="ic"><use href="#p-prev"/></svg></button><button class="cell" aria-label="Play reverse"><svg class="ic"><use href="#p-rev"/></svg></button><button class="cell flip" aria-label="Play"><svg class="ic"><use href="#p-rev"/></svg></button><button class="cell flip" aria-label="Next keyframe"><svg class="ic"><use href="#p-prev"/></svg></button><button class="cell flip" aria-label="Jump to end"><svg class="ic"><use href="#p-first"/></svg></button></div>
          <i class="grow d"></i>
          <input class="frame" aria-label="Current frame" value="1">
          <div class="grp range"><button class="cell" aria-label="Preview range"><svg class="ic"><use href="#watch"/></svg></button><label class="start">Start<input value="1"></label><label class="end">End<input value="250"></label></div>
        </header>
        <div class="ruler"><i></i><span>10</span><span>20</span><span>30</span><span>40</span><span>50</span><span>60</span><span>70</span><span>80</span><span>90</span><span>100</span><span>110</span><span>120</span><span>130</span><span>140</span><span>150</span><span>160</span><span>170</span><span>180</span><span>190</span><span>200</span><span>210</span><span>220</span><span>230</span><span>240</span><span>250</span><i></i></div>
        <svg class="track" viewBox="0 0 21090 36" preserveAspectRatio="none"><defs><pattern id="ticks" x="675" width="785.400" height="36" patternUnits="userSpaceOnUse"><path d="M0 0h10v36H0z" fill="#1a1a1a"/><path d="M393 0h10v36h-10z" fill="#222"/></pattern></defs><path d="M755 0H20310V36H755z" fill="#303030"/><path d="M0 0H21090V36H0z" fill="url(#ticks)"/></svg>
        <div class="playhead"><b>1</b></div>
        <i class="hscroll"></i>
        <button class="flap tl" aria-label="Show channels"><svg class="cv"><use href="#chev-r"/></svg></button>
        <button class="flap tr" aria-label="Show sidebar"><svg class="cv"><use href="#chev-l"/></svg></button>
      </section>
    </div>

    <div class="rightcol">
      <section class="editor outliner">
        <header class="bar">
          <button class="ed box" aria-label="Editor type"><svg class="ic"><use href="#tree"/></svg><svg class="cv"><use href="#chev"/></svg></button>
          <button class="ed box" aria-label="Display mode"><svg class="ic"><use href="#layers"/></svg><svg class="cv"><use href="#chev"/></svg></button>
          <label class="find"><svg class="ic"><use href="#search"/></svg><input type="search" placeholder="Search" aria-label="Search outliner"></label>
          <button class="ed box push" aria-label="Filter"><svg class="ic"><use href="#filter"/></svg><svg class="cv"><use href="#chev"/></svg></button>
          <div class="grp solo"><button class="cell" aria-label="New collection"><svg class="ic"><use href="#newcol"/></svg></button></div>
        </header>
        <ul class="objs">
          <li class="d0"><svg class="ic"><use href="#coll"/></svg><span>Scene Collection</span></li>
          <li class="d1"><svg class="cv big"><use href="#chev"/></svg><em><svg class="ic"><use href="#coll"/></svg></em><span class="hi">Collection</span><input type="checkbox" checked aria-label="Include collection"><svg class="ic eye"><use href="#eye"/></svg><svg class="ic"><use href="#photo"/></svg></li>
          <li class="d2"><svg class="cv big"><use href="#chev-r"/></svg><em class="no obj"><svg class="ic"><use href="#camf"/></svg></em><span>Camera</span><em class="data"><svg class="ic"><use href="#cam"/></svg></em><svg class="ic eye"><use href="#eye"/></svg><svg class="ic"><use href="#photo"/></svg></li>
          <li class="d2"><svg class="cv big"><use href="#chev-r"/></svg><em class="no obj"><svg class="ic"><use href="#bulb"/></svg></em><span>Light</span><em class="data no"><svg class="ic"><use href="#lightd"/></svg></em><svg class="ic eye"><use href="#eye"/></svg><svg class="ic"><use href="#photo"/></svg></li>
          <li class="d2 sel"><svg class="cv big"><use href="#chev"/></svg><em class="obj"><svg class="ic"><use href="#tri"/></svg></em><span class="act">Plane</span><svg class="ic eye"><use href="#eye"/></svg><svg class="ic"><use href="#photo"/></svg></li>
          <li class="d3"><i class="cv big"></i><em class="no data0"><svg class="ic"><use href="#mesh"/></svg></em><span>Plane</span></li>
          <li class="d3"><svg class="cv big"><use href="#chev-r"/></svg><em class="no mod"><svg class="ic"><use href="#wrench"/></svg></em><span>Modifiers</span><em class="data mod"><svg class="ic"><use href="#nodes"/></svg></em></li>
        </ul>
      </section>

      <section class="editor properties">
        <header class="bar">
          <button class="ed box" aria-label="Editor type"><svg class="ic"><use href="#props"/></svg><svg class="cv"><use href="#chev"/></svg></button>
          <label class="find"><svg class="ic"><use href="#search"/></svg><input type="search" placeholder="Search" aria-label="Search properties"></label>
          <button class="ed box slim push" aria-label="Options"><svg class="cv"><use href="#chev"/></svg></button>
        </header>
        <div class="prop-body">
          <nav class="ptabs">
            <div><button aria-label="Tool"><svg class="ic"><use href="#tool"/></svg></button></div>
            <div><button aria-label="Render"><svg class="ic"><use href="#render"/></svg></button><button aria-label="Output"><svg class="ic"><use href="#output"/></svg></button><button aria-label="View layer"><svg class="ic"><use href="#layers"/></svg></button><button aria-label="Scene"><svg class="ic"><use href="#scene"/></svg></button><button class="red" aria-label="World"><svg class="ic"><use href="#world"/></svg></button></div>
            <div><button class="wht" aria-label="Collection"><svg class="ic"><use href="#collo"/></svg></button></div>
            <div><button class="org" aria-label="Object"><svg class="ic"><use href="#object"/></svg></button><button class="blu on" aria-label="Modifiers"><svg class="ic"><use href="#wrench"/></svg></button><button class="blu" aria-label="Particles"><svg class="ic"><use href="#parts"/></svg></button><button class="blu" aria-label="Physics"><svg class="ic"><use href="#phys"/></svg></button><button class="blu" aria-label="Constraints"><svg class="ic"><use href="#cons"/></svg></button><button class="grn" aria-label="Data"><svg class="ic"><use href="#mesh"/></svg></button><button class="red" aria-label="Material"><svg class="ic"><use href="#mat"/></svg></button></div>
          </nav>
          <div class="pmain">
            <nav class="crumbs"><svg class="ic"><use href="#object"/></svg><a href="#plane">Plane</a><svg class="cv big"><use href="#chev-r"/></svg><svg class="ic"><use href="#nodes"/></svg><a href="#mod">GeometryNodes</a><svg class="ic pin"><use href="#pin"/></svg></nav>
            <button class="add"><svg class="ic"><use href="#plus"/></svg><span>Add Modifier</span></button>
            <div class="modifier">
              <div class="mrow top"><svg class="cv big"><use href="#chev"/></svg><svg class="ic"><use href="#nodes"/></svg>
                <div class="grp"><input aria-label="Modifier name" value="Geom..."><button class="cell" aria-label="On cage"><svg class="ic"><use href="#mesh"/></svg></button><button class="cell on" aria-label="Edit mode"><svg class="ic"><use href="#editm"/></svg></button><button class="cell on" aria-label="Viewport"><svg class="ic"><use href="#screen"/></svg></button><button class="cell on" aria-label="Render"><svg class="ic"><use href="#photo"/></svg></button><button class="ed slim" aria-label="Extras"><svg class="cv big"><use href="#chev"/></svg></button></div>
                <button class="bare" aria-label="Remove"><svg class="ic"><use href="#x"/></svg></button><i class="grip"></i></div>
              <div class="mrow"><div class="grp wide"><button class="ed" aria-label="Browse"><svg class="ic"><use href="#ntree"/></svg><svg class="cv"><use href="#chev"/></svg></button><input aria-label="Node group" value="Test2"><button class="cell dim" aria-label="Fake user"><svg class="ic"><use href="#shield"/></svg></button><button class="cell" aria-label="Duplicate"><svg class="ic"><use href="#copy"/></svg></button><button class="cell" aria-label="Unlink"><svg class="ic"><use href="#x"/></svg></button></div></div>
              <button class="manage"><svg class="cv big"><use href="#chev-r"/></svg>Manage</button>
            </div>
          </div>
        </div>
      </section>
    </div>
  </main>

  <footer class="status"><svg class="ic"><use href="#mouse"/></svg><span>Select</span><svg class="ic flip2"><use href="#mouse"/></svg><span>Lazy Connect</span><i class="grow"></i><svg class="ic"><use href="#globe"/></svg><span class="ver">4.5.3</span></footer>

  <svg class="marks" viewBox="0 0 2550 1521" preserveAspectRatio="none" aria-hidden="true">
    <g fill="none" stroke="#fd5250" stroke-width="6" stroke-linejoin="round"><path d="M20 286H238V479H20zM7 514H267V600H7zM1402 910H1689V1119H1402z"/></g>
    <g fill="#fd5250"><path d="M232 394L273 402 268 409 583 600 581 603 262 419 258 428zM318 562L361 559 357 568 588 640 587 642 353 579 352 589zM929 741L1374 888 1376 878 1408 906 1365 907 1370 899 927 743z"/></g>
  </svg>
  <div class="note" lang="zh-CN"><p>当我执行了合并几何的操作时,</p><p>这个输出的几何数据本身就既有mesh信息,也包含点信息了</p><p>请注意,举例来说:</p><p>如果这个几何体看上去:同时有立方体和这个平面</p><p>会被同时存储在mesh里面,从数据层面他们是一体的</p><p>这也就是每个几何组件只能有一个的说明</p></div>
</div>
<script src="scene.js"></script>
</body>
</html>
```

FILE: styles.css
```css
*{box-sizing:border-box}
html,body{margin:0;height:100%;background:#181818}
body{font:16px/20px Inter,"Noto Sans","Noto Sans CJK SC",sans-serif;color:#e0e0e0;overflow:hidden}
button,input,select{font:inherit;color:inherit;margin:0;padding:0;border:0;background:none;border-radius:0;outline:0;appearance:none}
button{display:flex;align-items:center;justify-content:center;white-space:nowrap}
input{min-width:0}
ul{list-style:none;margin:0;padding:0}
h1,h2,p{margin:0;font-weight:400;font-size:inherit}
a{color:inherit;text-decoration:none}
.sprite{position:absolute;width:0;height:0}
.ln{fill:none;stroke:currentColor;stroke-width:1.5}
.thick{stroke-width:2}
.dim{opacity:.65}
.hub{fill:currentColor}
.wr{fill:none;stroke:currentColor;stroke-width:1.5}
svg{flex:none;display:block}
.ic{width:22px;height:22px}
.cv{width:11px;height:11px}
.cv.big{width:14px;height:14px}
.grow{flex:1}

.app{position:relative;display:flex;flex-direction:column;min-height:100%;background:#181818}
.titlebar{display:flex;align-items:center;height:38px;border-top:1px solid #000;padding-bottom:3px}
.titlebar h1{flex:1;font:17px/22px "Open Sans",sans-serif;color:#fff;margin-left:9px}
.logo{width:24px;height:24px;color:#ea7a0c}
.logo .hub{fill:#265787}
.winctl{display:flex;padding-bottom:2px}
.winctl button{width:70px;height:30px;color:#fff}
.winctl button:last-child{width:64px}
.winctl svg{width:16px;height:16px}

.topbar{display:flex;height:35px}
.brand{width:36px;margin-left:4px;height:30px;color:#e0e0e0}
.brand .ic{width:26px;height:26px}
.menus{display:flex}
.menus button{padding:0 12px;height:28px}
.topbar .menus{margin-right:21px}
.topbar .menus button{height:30px}
.topbar .menus button:first-child{padding-left:8px}
.tabs{display:flex;gap:1px;padding-top:3px}
.tabs button{height:31px;padding:0 15px;background:#1d1d1d;color:#989898;border-radius:6px 6px 0 0}
.tabs button.on{background:#303030;color:#fff}
.tabs button:last-child{padding:0 8px}
.ids{margin-left:auto;display:flex;gap:9px;padding:2px 5px 0 0}
.grp{display:flex;height:28px;border-radius:6px;overflow:hidden;gap:1px;background:#3d3d3d;box-shadow:0 0 0 1px #3d3d3d}
.cell{width:28px;height:28px;background:#545454;color:#e6e6e6;display:flex;align-items:center;justify-content:center;opacity:1}
.cell.dim{color:#a0a0a0}
.cell.off{background:#333;color:#555}
.cell.on{background:#4772b3;color:#fff}
.cell.field{background:#1d1d1d}
.faint{color:#777}
.grp input{background:#1d1d1d;padding-left:11px;flex:1}
.ed{width:44px;height:28px;background:#282828;gap:1px;color:#e6e6e6;flex:none}
.ed.off{color:#555}
.ed.slim{width:28px}
.ed.box{border-radius:6px;box-shadow:inset 0 0 0 1px #3d3d3d}
.scene input{width:115px;flex:none}
.layer input{width:115px;flex:none}

.screen{flex:1;display:grid;grid-template-columns:minmax(0,2109fr) minmax(0,432fr);gap:6px;padding-right:3px;min-height:0}
.left{display:grid;grid-template-rows:630fr 672fr 109px;gap:6px;min-height:0}
.upper{display:grid;grid-template-columns:minmax(0,1128fr) minmax(0,976fr);gap:5px;min-height:0}
.rightcol{display:grid;grid-template-rows:405fr 1015fr;gap:3px;min-height:0}
.editor{position:relative;display:flex;flex-direction:column;background:#303030;border-radius:9px;overflow:hidden;min-width:0;min-height:0}
.editor::after{content:"";position:absolute;inset:0;border:1px solid #3c3c3c;border-radius:9px;pointer-events:none}
.bar{display:flex;align-items:center;height:38px;padding:0 12px 0 9px;gap:8px;flex:none}
.dd{display:grid;align-items:center;height:28px;background:#282828;border-radius:6px;box-shadow:inset 0 0 0 1px #3d3d3d;padding:0 9px 0 12px;grid-template-columns:1fr auto}
.dd select{width:100%;height:28px}
.bar .menus{margin-left:-2px}

.spread-body{flex:1;display:flex;min-height:0}
.side{position:relative;width:236px;flex:none;background:#2a2a2a;overflow:hidden;border-radius:0 0 6px 0}
.vscroll{position:absolute;left:0;top:20px;width:5px;height:517px;background:#383838;border-radius:3px}
.vscroll.right{left:auto;right:2px;top:31px;height:237px;width:6px}
.phead{display:flex;align-items:center;gap:8px;height:34px;padding:0 15px 6px 17px;background:#303030;color:#d4d4d4}
.phead.first{height:27px;padding-bottom:12px;gap:12px;line-height:15px}
.phead .pin{margin-left:auto;color:#999}
.eval{margin:7px 12px 7px 9px;height:29px;padding:0 4px 0 12px}
.geo{width:213px;height:28px;margin:8px 0 10px 10px;background:#4772b3;border-radius:5px;justify-content:flex-start;padding-left:30px;gap:14px;color:#fff}
.domains{padding:6px 12px 0 10px}
.domains li{display:flex;align-items:center;height:32px;color:#d4d4d4;padding-left:10px}
.domains .cv{margin-right:6px}
.domains .ic{margin-right:13px}
.domains .sub{padding-left:50px}
.domains b{margin-left:auto;font-weight:400;color:#7d7d7d;padding-right:8px;font-feature-settings:"tnum"}
.domains .none{padding-left:30px;color:#606060}
.domains .sel{height:28px;margin:2px 0;background:#4772b3;color:#fff;border-radius:5px}
.domains .sel b{color:#a4b8da}
.tablewrap{position:relative;flex:1;background:#2b2b2b;overflow:hidden}
table{width:100%;table-layout:fixed;border-collapse:collapse;color:#c6c6c6;font-size:17px;font-feature-settings:"tnum"}
.c-i{width:44px}.c-x{width:94px}.c-y{width:91px}.c-id{width:135px}.c-r{width:101px}.c-u{width:96px}.c-v{width:92px}
th,td{padding:0 6px 1px 0;font-weight:400;text-align:right;height:29px}
thead th{height:31px;text-align:center;background:#303030;border-bottom:1px solid #1e1e1e;border-right:1px solid #1e1e1e;padding:0 4px 0 0;font-size:16px}
thead th:last-child{border-right:0}
tbody tr{background:#282828}
tbody tr:nth-child(even){background:#2b2b2b}
tbody th{background:#303030;border-right:1px solid #1e1e1e;padding-right:5px}
tbody tr:nth-child(even) th{background:#333}
td:nth-child(4),td:nth-child(5),td:nth-child(6),td:nth-child(8){border-right:1px solid #1e1e1e}
.stats{display:flex;align-items:center;justify-content:flex-end;gap:14px;height:37px;padding-right:14px;flex:none}
.stats i{width:1px;height:20px;background:#d0d0d0}
.flap{position:absolute;right:0;top:31px;width:14px;height:27px;background:#242424cc;border-radius:5px 0 0 5px;color:#aaa}
.flap.v{top:107px}
.flap.n{top:67px;width:12px}
.flap.nl,.flap.tl{right:auto;left:0;width:9px;top:69px;border-radius:0 5px 5px 0}
.flap.tl,.flap.tr{top:68px;width:9px}

.view3d{background:#3d3d3d}
.world{position:absolute;inset:0;width:100%;height:100%}
.view3d .bar{position:relative;background:#303030dd;height:40px;padding:0 0 2px 12px}
.mode{width:162px;grid-template-columns:auto 1fr auto;gap:9px;padding:0 8px 0 6px}
.orient{width:112px;grid-template-columns:auto 1fr auto;gap:10px;padding:0 6px}
.view3d .last{border-radius:6px 0 0 6px}
.view3d .last .slim{width:26px}
.bar2{position:relative;display:flex;justify-content:space-between}
.pad{background:#303030dd;padding:4px 12px 4px 12px;height:36px}
.pad.l{border-radius:0 0 8px 0}
.pad.r{border-radius:0 0 0 8px}
.modes .cell{width:27px;color:#c4c4c4}
.modes .cell.on{color:#fff}
.opts{width:96px;gap:12px;padding-left:4px}
.stage{position:relative;flex:1;display:flex;padding:13px 14px 0 13px}
.tools{display:flex;flex-direction:column;gap:10px}
.tools div{border-radius:6px;overflow:hidden}
.tools button{position:relative;width:58px;height:49px;background:#282828;border-bottom:1px solid #3d3d3d;color:#e6e6e6}
.tools button.on{background:#4772b3}
.tools svg{width:36px;height:36px}
.more::after{content:"";position:absolute;right:3px;bottom:3px;border:3px solid;border-color:transparent #999 #999 transparent}
.info{margin:-2px 0 0 26px;line-height:27px;color:#fff;text-shadow:1px 1px 2px #000;font-weight:500;height:54px}
.nav{margin-left:auto;display:flex;flex-direction:column;align-items:flex-end;gap:3px;padding-top:8px}
.axis{width:110px;height:108px;margin:0 5px 3px 0}
.axis text{font:600 15px Inter,sans-serif;text-anchor:middle;fill:#1d1d1d}
.nav button{width:42px;height:42px;border-radius:50%;background:#282828cc;color:#d8d8d8}
.nav .ic{width:26px;height:26px}

.nodes{background:#1d1d1d radial-gradient(circle,#282828 1px,transparent 2px) 10px 52px/32px 32px}
.kind{width:116px}
.grow.a{flex:459}.grow.b{flex:827}
.tree input{width:115px;flex:none}
.bare{width:28px;height:28px;color:#a0a0a0}
.crumbs{display:flex;align-items:center;height:32px;margin-top:16px;padding-left:25px}
.crumbs a{margin:0 23px 0 13px}
.crumbs .cv{margin-right:10px}
.canvas{position:absolute;inset:0;font-size:17px}
.links{position:absolute;left:0;top:0}
.links path{fill:none}
.lo path{stroke:#101010;stroke-width:6}
.li path{stroke:#00d0a0;stroke-width:4}
.li .pale{stroke:#adf0e0}
.nodes .bar,.nodes .crumbs{position:relative;z-index:1}
.node{position:absolute;background:#303030;border-radius:7px;box-shadow:0 0 0 1px #141414,0 4px 12px #000a}
.node h2{display:flex;align-items:center;gap:8px;height:32px;padding-left:17px;background:#1e1e1e;border-radius:7px 7px 0 0;white-space:nowrap}
.row{position:relative;display:flex;align-items:center;height:34px;padding:0 16px}
.row.out{justify-content:flex-end}
.sk{position:absolute;left:-7px;top:10px;width:15px;height:15px;border-radius:50%;background:#00d6a3;border:1px solid #111}
.out .sk,.sk.r{left:auto;right:-7px}
.sk.e{background:#303030;border-color:#8a8a8a}
.sk.d{border-radius:1px;transform:rotate(45deg);width:13px;height:13px;top:10px;left:-6px}
.out .sk.d{left:auto;right:-6px}
.sk.vec{background:#6363c7}.sk.rot{background:#a663c7}
.sk.sel{background:radial-gradient(circle,#111 1px,#cca6d6 2px)}
.sk.val{background:radial-gradient(circle,#111 1px,#a1a1a1 2px)}
.sk.int{background:#598c5c;top:8px}
.n-in{left:505px;top:354px;width:224px;height:111px}
.n-in h2{margin-bottom:6px}
.n-dist{left:927px;top:196px;width:272px;height:320px}
.n-dist h2{background:#1d725e;margin-bottom:6px;height:31px}
.rnd{margin:10px 16px 2px;height:30px;padding:0 5px 0 11px}
.num{height:30px;margin:0 16px 3px;padding:0 21px 0 24px;background:#545454;border-radius:5px}
.num .sk{left:-23px}
.num .sk.d{left:-22px;top:8px}
.num input{flex:1;text-align:right;width:80px;font-feature-settings:"tnum"}
.n-join{left:1448px;top:268px;width:225px;height:46px;border-radius:20px;background:#1d725e;display:flex;align-items:center;padding:0 15px 0 20px;gap:5px}
.n-join b{margin-left:auto;width:5px;height:12px;border:1px solid #4d9280;border-width:0 1px}
.n-join .sk{top:15px}
.n-join .r{left:auto}
.n-out{left:1781px;top:255px;width:225px;height:112px;box-shadow:0 0 0 1px #e8e8e8,0 4px 12px #000a}
.n-out h2{height:31px;margin-bottom:6px}
.canvas-v{left:auto;right:2px;top:38px;width:9px;height:443px;background:#3a3a3a;border-radius:5px}
.hscroll{position:absolute;left:9px;bottom:2px;width:1154px;height:5px;background:#2e2e2e;border-radius:3px}

.timeline .bar{height:38px}
.timeline .menus{margin-left:-5px}
.timeline .menus button{padding:0 11px}
.grow.c{flex:514}.grow.d{flex:532}
.pop .ed{justify-content:space-between;padding:0 5px 0 12px}
.w1{width:104px}.w2{width:91px}
.play{margin-left:1px}
.cell.flip .ic,.flip2{transform:scaleX(-1)}
.frame{width:106px;height:28px;border-radius:6px;background:#545454;text-align:center;font-feature-settings:"tnum"}
.range label{display:flex;align-items:center;background:#545454;padding:0 21px 0 23px}
.range input{background:none;text-align:right;padding:0;width:20px;font-feature-settings:"tnum"}
.start{width:128px}.end{width:123px}
.ruler{display:grid;grid-template-columns:1070fr repeat(25,785fr) 395fr;align-items:center;text-align:center;height:35px;background:#1d1d1d;color:#a8a8a8;font-feature-settings:"tnum"}
.track{width:100%;height:36px;background:#232323}
.timeline .hscroll{left:9px;right:14px;width:auto;height:7px;background:#3e3e3ecc}
.playhead{position:absolute;left:58px;top:42px;bottom:0;width:36px;background:linear-gradient(#4772b3,#4772b3) 50% 0/2px 100% no-repeat}
.playhead b{display:block;height:27px;line-height:27px;border-radius:6px;background:#4772b3;color:#fff;text-align:center;font-weight:500}

.outliner{background:#282828}
.outliner .bar,.properties .bar{padding:0 3px 0 11px}
.outliner .ed.box,.properties .ed.box:first-child{width:46px}
.find{display:flex;align-items:center;gap:9px;width:174px;height:28px;background:#1d1d1d;border-radius:6px;box-shadow:inset 0 0 0 1px #3d3d3d;padding:0 7px;margin-left:13px}
.find input{flex:1;width:100%}
.find input::placeholder{color:#606060}
.push{margin-left:auto}
.objs{position:relative;flex:1;padding-top:1px;background:repeating-linear-gradient(#282828 0 29px,#2b2b2b 29px 58px) 0 1px}
.objs::before{content:"";position:absolute;left:43px;top:66px;width:1px;height:131px;background:#666}
.objs li{display:flex;align-items:center;height:29px;padding-right:7px;color:#c4c4c4}
.objs .cv{margin:0 8px 0 0}
.objs em{display:flex;align-items:center;justify-content:center;width:29px;height:26px;border-radius:6px;background:#505050}
.objs em .ic{color:#e0e0e0}
.objs em.no{background:none}
.objs span{margin:0 auto 0 5px;padding-top:1px}
.objs .d0 span{margin-left:8px}
.d0{padding-left:33px}.d1{padding-left:38px}.d2{padding-left:66px}.d3{padding-left:95px}
.objs .hi{color:#fff}.objs .act{color:#f5a33b}
.objs em.obj .ic{color:#c8814a}
.objs em.data .ic,.objs em.data0 .ic{color:#10b58a}
.objs em.mod .ic{color:#6487d8}
.objs .data{margin-left:30px;margin-right:auto}
.objs span:has(+ .data){margin-right:0}
.objs .ic{color:#dcdcdc}
.objs .eye{margin-right:8px;width:20px}
.objs li.sel{background:#334d80}
.objs .sel em{background:#5d7096}
.objs input{width:16px;height:16px;border-radius:2px;background:#e6e6e6;margin-right:12px;display:grid;place-items:center}
.objs input::before{content:"";width:9px;height:4px;border:solid #222;border-width:0 0 2px 2px;transform:rotate(-45deg)}

.properties .bar{height:40px}
.properties .find{margin-left:68px}
.prop-body{flex:1;display:flex;min-height:0}
.ptabs{width:44px;background:#1d1d1d;padding-left:6px;flex:none;padding-top:10px}
.ptabs div{border-bottom:1px solid #151515;padding-bottom:1px;margin-bottom:10px}
.ptabs button{width:38px;height:40px;color:#b0b0b0;border-radius:6px 0 0 6px}
.ptabs .on{background:#303030}
.ptabs .red{color:#b55a60}.ptabs .wht{color:#d8d8d8}.ptabs .org{color:#c8814a}.ptabs .blu{color:#5f84d0}.ptabs .grn{color:#12b389}
.ptabs .on.blu{color:#6ea0ff}
.ptabs .on .wr{fill:currentColor}
.pmain{flex:1;padding:10px 4px 0 11px;min-width:0}
.pmain .crumbs{margin:0;padding:0 3px 0 5px}
.pmain .pin{margin-left:auto;color:#888}
.add{width:100%;height:28px;margin-top:23px;background:#545454;border-radius:5px;padding-left:8px}
.add .ic{color:#fff}
.add span{flex:1;text-align:center}
.modifier{margin-top:14px;background:#3b3b3b;border:1px solid #4772b3;border-radius:6px;height:118px;padding:5px 12px 0 12px}
.mrow{display:flex;align-items:center;height:28px;margin-bottom:15px}
.mrow>.ic{margin:0 17px 0 6px}
.mrow .grp{background:#303030;box-shadow:none}
.mrow .grp input{width:82px;flex:none}
.mrow .wide{flex:1}
.mrow .wide input{flex:1}
.top .bare{color:#e6e6e6}
.grip{margin-left:auto;width:18px;height:6px;background:radial-gradient(circle,#888 1px,transparent 2px) 0 0/5px 4px}
.manage{gap:8px;margin:-4px 0 0 8px;height:20px}

.status{display:flex;align-items:center;height:25px;padding:5px 12px 0 9px;color:#8f8f8f}
.status span+svg{margin-left:14px}
.status .ver{border-left:1px solid #8f8f8f;padding-left:8px;margin-left:12px}

.marks{position:absolute;inset:0;width:100%;height:100%;pointer-events:none;z-index:3}
.note{position:absolute;left:82px;top:794px;z-index:3;font:36px/48px "Noto Sans","Noto Sans CJK SC",sans-serif;color:#fd5250;white-space:nowrap}
```

FILE: scene.js
```js
// Floor grid and instanced points of the 3D viewport.
const NS = "http://www.w3.org/2000/svg";
const floor = document.getElementById("floor");
const vpX = [1078, -170], vpY = [3064, -169];

function project(u, v) {
  const w = 1 - 0.15445 * u + 0.09495 * v;
  return [(-166.5 * u + 290.9 * v + 1621.6) / w, (26.3 * u - 16 * v + 388.5) / w];
}
function line(from, through, alpha) {
  const el = document.createElementNS(NS, "line");
  el.setAttribute("x1", from[0]);
  el.setAttribute("y1", from[1]);
  el.setAttribute("x2", from[0] + (through[0] - from[0]) * 6);
  el.setAttribute("y2", from[1] + (through[1] - from[1]) * 6);
  el.setAttribute("stroke", "#505050");
  el.setAttribute("stroke-width", "1.5");
  el.setAttribute("opacity", alpha);
  floor.append(el);
}
for (let k = -12; k <= 4; k++) if (k) line(vpY, project(k, 0), k < -5 ? 0.5 : 0.9);
for (let k = -6; k <= 14; k++) if (k) line(vpX, project(0, k), k > 7 ? 0.5 : 0.9);

const points = [[1612,297],[1617,301],[1581,304],[1702,305],[1641,309],[1540,318],[1604,321],[1670,324],[1548,326],[1528,328],[1605,330],[1572,331],[1634,336],[1484,346],[1696,352],[1487,366],[1776,369],[1458,371],[1730,373],[1565,394],[1581,394],[1592,398],[1539,403],[1575,407],[1784,409],[1645,411],[1773,414],[1578,422],[1509,426],[1501,433],[1551,433],[1735,445],[1793,453],[1793,447],[1742,460],[1634,465],[1580,486],[1511,492],[1633,529],[1550,556]];
for (const [x, y] of points) {
  const el = document.createElementNS(NS, "use");
  el.setAttribute("href", "#cone");
  el.setAttribute("transform", `translate(${x} ${y}) scale(${0.85 + (y - 300) / 700})`);
  document.getElementById("points").append(el);
}
```
